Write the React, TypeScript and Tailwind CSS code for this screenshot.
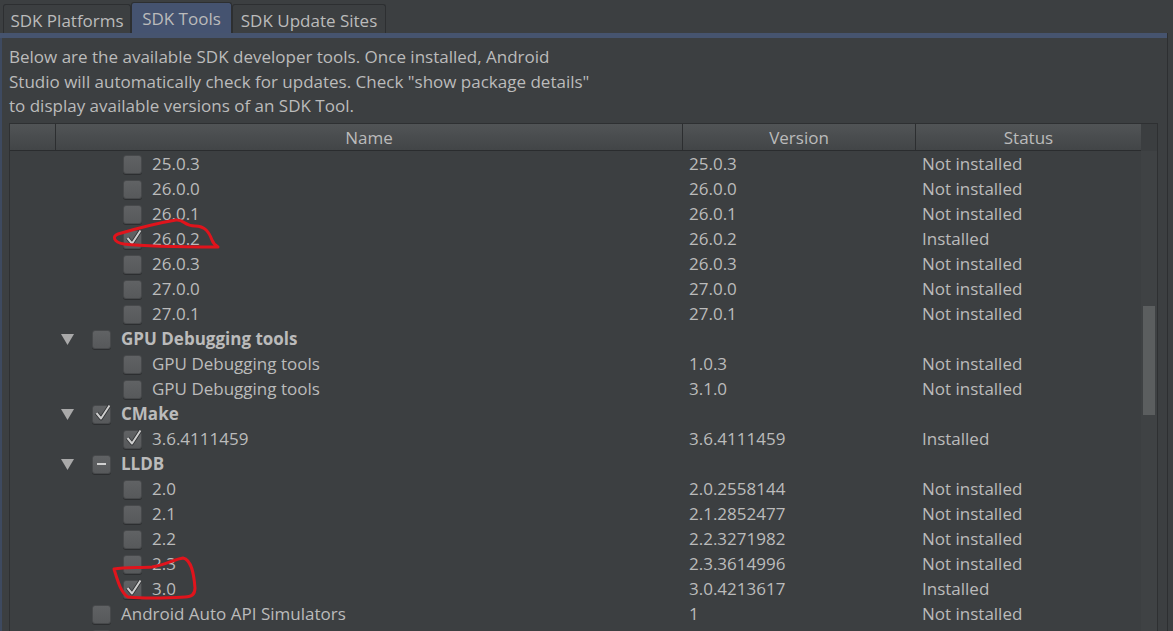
import React from 'react';

type Check = 'none' | 'checked' | 'partial';

type Row = {
  level: 1 | 2;
  name: string;
  version?: string;
  status?: string;
  check: Check;
  expander?: boolean;
};

const rows: Row[] = [
  { level: 2, name: '25.0.3', version: '25.0.3', status: 'Not installed', check: 'none' },
  { level: 2, name: '26.0.0', version: '26.0.0', status: 'Not installed', check: 'none' },
  { level: 2, name: '26.0.1', version: '26.0.1', status: 'Not installed', check: 'none' },
  { level: 2, name: '26.0.2', version: '26.0.2', status: 'Installed', check: 'checked' },
  { level: 2, name: '26.0.3', version: '26.0.3', status: 'Not installed', check: 'none' },
  { level: 2, name: '27.0.0', version: '27.0.0', status: 'Not installed', check: 'none' },
  { level: 2, name: '27.0.1', version: '27.0.1', status: 'Not installed', check: 'none' },
  { level: 1, name: 'GPU Debugging tools', check: 'none', expander: true },
  { level: 2, name: 'GPU Debugging tools', version: '1.0.3', status: 'Not installed', check: 'none' },
  { level: 2, name: 'GPU Debugging tools', version: '3.1.0', status: 'Not installed', check: 'none' },
  { level: 1, name: 'CMake', check: 'checked', expander: true },
  { level: 2, name: '3.6.4111459', version: '3.6.4111459', status: 'Installed', check: 'checked' },
  { level: 1, name: 'LLDB', check: 'partial', expander: true },
  { level: 2, name: '2.0', version: '2.0.2558144', status: 'Not installed', check: 'none' },
  { level: 2, name: '2.1', version: '2.1.2852477', status: 'Not installed', check: 'none' },
  { level: 2, name: '2.2', version: '2.2.3271982', status: 'Not installed', check: 'none' },
  { level: 2, name: '2.3', version: '2.3.3614996', status: 'Not installed', check: 'none' },
  { level: 2, name: '3.0', version: '3.0.4213617', status: 'Installed', check: 'checked' },
  { level: 1, name: 'Android Auto API Simulators', version: '1', status: 'Not installed', check: 'none' },
  { level: 1, name: '', check: 'none' },
];

function CheckBox({ state }: { state: Check }) {
  return (
    <div className="relative w-[19px] h-[19px] shrink-0 rounded-[3px] bg-gradient-to-b from-[#606264] to-[#57595b] border border-[#47494b] shadow-[0_1px_0_#2c2e30]">
      {state === 'checked' && (
        <svg className="absolute left-[-1px] top-[-3px] overflow-visible" width="20" height="20" viewBox="0 0 20 20">
          <path d="M4.5 10 L9 15.5 L17.5 2.5" fill="none" stroke="#2e3032" strokeWidth="3.6" strokeLinejoin="round" />
          <path d="M4.5 10 L9 15.5 L17.5 2.5" fill="none" stroke="#cdcdcd" strokeWidth="2" strokeLinejoin="round" />
        </svg>
      )}
      {state === 'partial' && (
        <div className="absolute left-[4px] top-[7px] w-[9px] h-[2px] bg-[#d0d0d0]" />
      )}
    </div>
  );
}

function Expander() {
  return (
    <svg width="13" height="11" viewBox="0 0 13 11">
      <polygon points="0,0 13,0 6.5,11" fill="#a9a9a9" />
    </svg>
  );
}

function TreeRow({ row }: { row: Row }) {
  return (
    <div className="flex h-[25px] items-center text-[#bbbbbb] shrink-0">
      <div className="w-[46px] shrink-0" />
      <div className="w-[627px] shrink-0 flex items-center">
        {row.level === 1 ? (
          <>
            <div className="w-[36px] pl-[5px] flex items-center">{row.expander && <Expander />}</div>
            <CheckBox state={row.check} />
            <span className={`ml-[10px] ${row.expander ? 'font-bold' : ''}`}>{row.name}</span>
          </>
        ) : (
          <>
            <div className="w-[67px]" />
            <CheckBox state={row.check} />
            <span className="ml-[10px]">{row.name}</span>
          </>
        )}
      </div>
      <div className="w-[233px] shrink-0 pl-[6px]">{row.version}</div>
      <div className="flex-1 pl-[6px]">{row.status}</div>
    </div>
  );
}

function Tab({ label, selected, width }: { label: string; selected?: boolean; width: string }) {
  if (selected) {
    return (
      <div className={`${width} h-[31px] flex items-start justify-center pt-[3px] rounded-t-[3px] border border-b-0 border-[#2d2f31] bg-[#455370] text-[#bbbbbb]`}>
        {label}
      </div>
    );
  }
  return (
    <div className={`${width} h-[29px] flex items-start justify-center pt-[3px] rounded-t-[3px] border border-b-0 border-[#2d2f31] bg-[#3c3f41] text-[#bbbbbb]`}>
      {label}
    </div>
  );
}

export default function App() {
  return (
    <div className="relative w-[1173px] h-[631px] overflow-hidden bg-[#3c3f41] font-['Open_Sans',sans-serif] text-[17px] flex flex-col">
      {/* tabs */}
      <div className="h-[33px] shrink-0 flex items-end pl-[3px]">
        <Tab label="SDK Platforms" width="w-[128px]" />
        <Tab label="SDK Tools" width="w-[101px]" selected />
        <Tab label="SDK Update Sites" width="w-[154px]" />
      </div>
      <div className="h-[5px] shrink-0 w-[1168px] bg-[#46546f] border-r border-[#2d2f31]" />

      {/* panel */}
      <div className="flex-1 min-h-0 w-[1168px] border-l-2 border-l-[#3e4a60] border-r border-r-[#2d2f31] flex flex-col">
        <p className="pl-[7px] pt-[7px] leading-[24.5px] text-[#bbbbbb]">
          Below are the available SDK developer tools. Once installed, Android
          <br />
          Studio will automatically check for updates. Check "show package details"
          <br />
          to display available versions of an SDK Tool.
        </p>

        <div className="mt-[4px] ml-[7px] w-[1149px] flex-1 min-h-0 border border-[#2e3032] border-b-0 flex">
          {/* table */}
          <div className="w-[1131px] flex flex-col min-h-0">
            <div className="h-[27px] shrink-0 flex bg-gradient-to-b from-[#515456] to-[#424547] border-b border-[#2a2c2e] text-[#bbbbbb]">
              <div className="w-[46px] border-r border-[#2c2e30]" />
              <div className="w-[627px] border-r border-[#2c2e30] flex items-center justify-center pt-[2px]">Name</div>
              <div className="w-[233px] border-r border-[#2c2e30] flex items-center justify-center pt-[2px]">Version</div>
              <div className="flex-1 flex items-center justify-center pt-[2px]">Status</div>
            </div>
            <div className="flex-1 min-h-0 overflow-hidden flex flex-col pt-[1px]">
              {rows.map((r, i) => (
                <TreeRow key={i} row={r} />
              ))}
            </div>
          </div>
          {/* scrollbar */}
          <div className="flex-1 flex flex-col">
            <div className="h-[27px] shrink-0 bg-[#3b3e40]" />
            <div className="flex-1 bg-[#3f4244] pt-[155px] px-[2px]">
              <div className="h-[109px] bg-[#5b5e5f]" />
            </div>
          </div>
        </div>
      </div>

      {/* hand-drawn red annotations */}
      <svg className="absolute left-0 top-0 pointer-events-none" width="1173" height="631" viewBox="0 0 1173 631">
        <path
          d="M218 247 C190 247, 150 247, 124 244 C113 242, 112 236, 118 234 C135 229, 158 223, 176 220 C184 219, 184 226, 195 226 C205 226, 209 232, 212 240 C213 243, 215 245, 218 247"
          fill="none"
          stroke="#e0141c"
          strokeWidth="3"
          strokeLinecap="round"
        />
        <path
          d="M114 569 C125 567, 140 568, 152 567 C165 565, 175 559, 183 558 C192 560, 194 575, 195 588 C195 594, 192 597, 185 597 C168 598, 148 599, 128 597 C121 593, 118 582, 114 569"
          fill="none"
          stroke="#e0141c"
          strokeWidth="3"
          strokeLinecap="round"
        />
      </svg>
    </div>
  );
}
